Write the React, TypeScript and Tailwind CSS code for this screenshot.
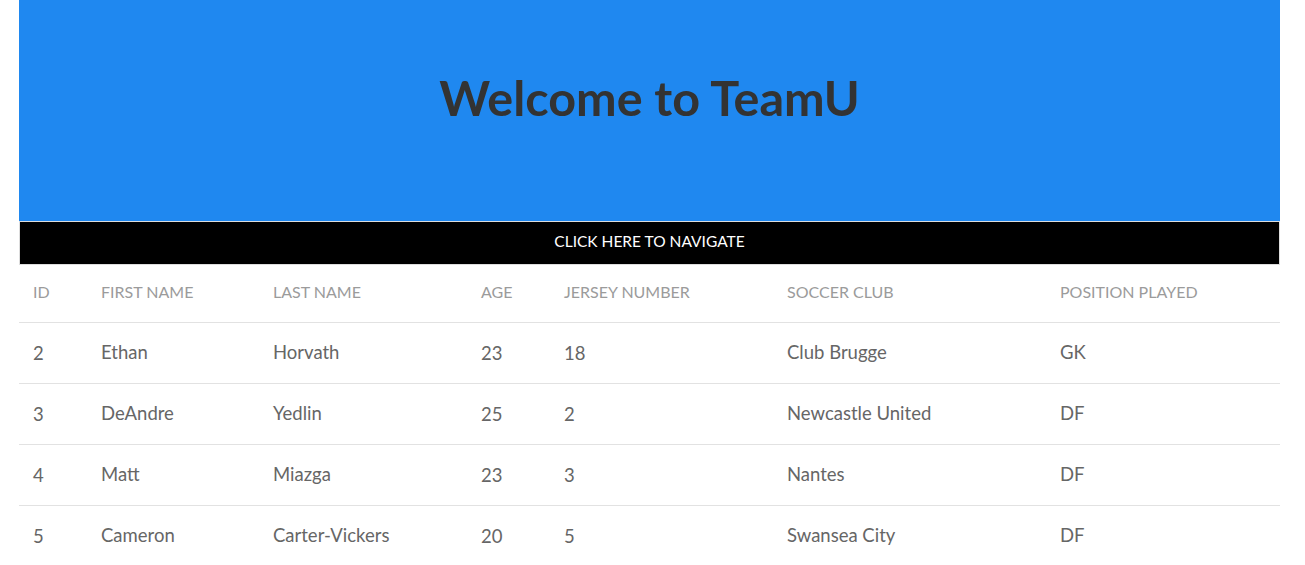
import React from 'react';

const players = [
  { id: 2, first: 'Ethan', last: 'Horvath', age: 23, jersey: 18, club: 'Club Brugge', pos: 'GK' },
  { id: 3, first: 'DeAndre', last: 'Yedlin', age: 25, jersey: 2, club: 'Newcastle United', pos: 'DF' },
  { id: 4, first: 'Matt', last: 'Miazga', age: 23, jersey: 3, club: 'Nantes', pos: 'DF' },
  { id: 5, first: 'Cameron', last: 'Carter-Vickers', age: 20, jersey: 5, club: 'Swansea City', pos: 'DF' },
];

const columns = [
  { label: 'ID', width: 'w-[68px]' },
  { label: 'First Name', width: 'w-[172px]' },
  { label: 'Last Name', width: 'w-[208px]' },
  { label: 'Age', width: 'w-[83px]' },
  { label: 'Jersey Number', width: 'w-[223px]' },
  { label: 'Soccer Club', width: 'w-[273px]' },
  { label: 'Position Played', width: 'w-[234px]' },
];

export default function App() {
  return (
    <div className="min-h-screen bg-white font-['Lato',sans-serif]">
      <div className="mx-[19px] w-[1261px]">
        {/* Header banner */}
        <div className="h-[221px] bg-[#1f88f0] pt-[68px]">
          <h1 className="text-center text-[48.5px] leading-[58px] font-bold text-[#333333] font-['Lato',sans-serif]">
            Welcome to TeamU
          </h1>
        </div>

        <button className="block w-full h-[44px] pb-[2px] bg-black border border-[#dddddd] text-white text-[15.5px] uppercase">
          Click here to navigate
        </button>

        <table className="w-full table-fixed border-collapse">
          <thead>
            <tr className="h-[57px] border-b border-[#e2e2e2]">
              {columns.map((c) => (
                <th
                  key={c.label}
                  className={`${c.width} pl-[14px] pb-[2px] text-left font-normal text-[16px] uppercase text-[#9b9b9b] align-middle`}
                >
                  {c.label}
                </th>
              ))}
            </tr>
          </thead>
          <tbody>
            {players.map((p) => (
              <tr key={p.id} className="h-[61px] border-b border-[#e2e2e2] text-[18.5px] text-[#666666]">
                <td className="pl-[14px] pt-[2px]">{p.id}</td>
                <td className="pl-[14px]">{p.first}</td>
                <td className="pl-[14px]">{p.last}</td>
                <td className="pl-[14px] pt-[2px]">{p.age}</td>
                <td className="pl-[14px] pt-[2px]">{p.jersey}</td>
                <td className="pl-[14px]">{p.club}</td>
                <td className="pl-[14px]">{p.pos}</td>
              </tr>
            ))}
          </tbody>
        </table>
      </div>
    </div>
  );
}
